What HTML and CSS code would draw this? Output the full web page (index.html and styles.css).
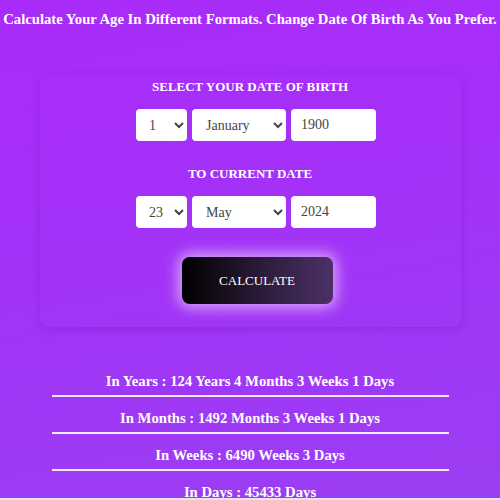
FILE: index.html
```html
<!DOCTYPE html>
<html lang="en">
<head>
<meta charset="utf-8">
<title>Age Calculator</title>
<link rel="stylesheet" href="styles.css">
</head>
<body>
  <h1 class="title">Calculate Your Age In Different Formats. Change Date Of Birth As You Prefer.</h1>
  <section class="card">
    <h2 class="label">SELECT YOUR DATE OF BIRTH</h2>
    <div class="row">
      <select class="field day"><option>1</option></select>
      <select class="field month"><option>January</option></select>
      <input class="field year" type="text" value="1900">
    </div>
    <h2 class="label second">TO CURRENT DATE</h2>
    <div class="row">
      <select class="field day"><option>23</option></select>
      <select class="field month"><option>May</option></select>
      <input class="field year" type="text" value="2024">
    </div>
    <button class="calc" type="button">CALCULATE</button>
  </section>
  <ul class="results">
    <li>In Years : 124 Years 4 Months 3 Weeks 1 Days</li>
    <li>In Months : 1492 Months 3 Weeks 1 Days</li>
    <li>In Weeks : 6490 Weeks 3 Days</li>
    <li>In Days : 45433 Days</li>
    <li>In Hours : 1090392 Hours</li>
  </ul>
</body>
</html>
```
FILE: styles.css
```css
html {
  background: #e9e4ee;
}
body {
  margin: 0;
  height: 498px;
  background: linear-gradient(170deg, #aa2bf9 0%, #a332f7 45%, #9a3ef3 100%);
  font-family: "Liberation Serif", "Times New Roman", serif;
  color: #fff;
}
.title {
  margin: 0;
  padding: 11px 0 0;
  font-size: 14.7px;
  line-height: 17px;
  font-weight: bold;
  text-align: center;
  white-space: nowrap;
}
.card {
  width: 421px;
  margin: 47px auto 0;
  padding: 4px 0 23px;
  border-radius: 8px;
  box-shadow: 0 2px 10px rgba(80, 10, 130, 0.22);
  display: flex;
  flex-direction: column;
  align-items: center;
}
.label {
  margin: 0;
  font-size: 13px;
  line-height: 15px;
  font-weight: bold;
}
.label.second {
  margin-top: 25px;
}
.row {
  display: flex;
  gap: 5px;
  margin-top: 15px;
  padding-left: 12px;
}
.field {
  height: 32px;
  border: none;
  border-radius: 4px;
  background: #fff;
  font-family: "Liberation Serif", "Times New Roman", serif;
  font-size: 14px;
  color: #444;
  box-sizing: border-box;
  outline: none;
}
.day {
  width: 51px;
  padding-left: 9px;
}
.month {
  width: 94px;
  padding-left: 10px;
}
.year {
  width: 85px;
  padding: 0 10px;
}
.calc {
  margin: 29px 0 0 14px;
  width: 151px;
  height: 47px;
  border: none;
  border-radius: 8px;
  background: linear-gradient(90deg, #000 0%, #2a1a36 50%, #4b3168 100%);
  box-shadow: 0 0 14px 4px rgba(240, 210, 255, 0.7);
  color: #fff;
  font-family: "Liberation Serif", "Times New Roman", serif;
  font-size: 13px;
}
.results {
  list-style: none;
  margin: 33px auto 0;
  padding: 0;
  width: 397px;
}
.results li {
  padding: 12px 0 4px;
  line-height: 19px;
  font-size: 14.7px;
  font-weight: bold;
  text-align: center;
  border-bottom: 2px solid #f3eaff;
}
```
